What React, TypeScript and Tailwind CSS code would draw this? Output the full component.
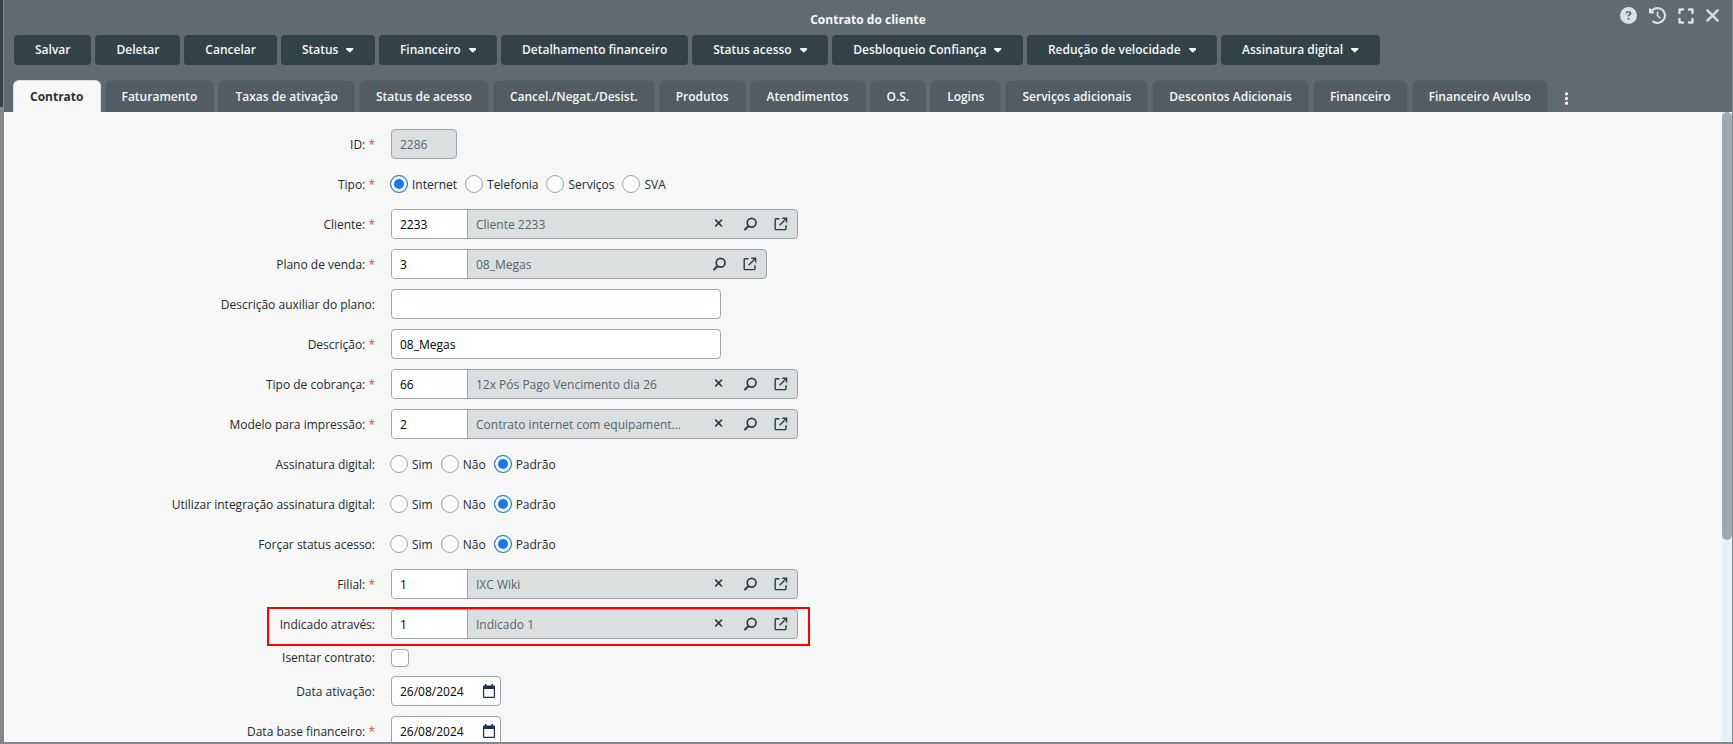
import React from "react";
import { FaCircleQuestion, FaClockRotateLeft, FaEllipsisVertical } from "react-icons/fa6";

const actions: { label: string; menu?: boolean }[] = [
  { label: "Salvar" },
  { label: "Deletar" },
  { label: "Cancelar" },
  { label: "Status", menu: true },
  { label: "Financeiro", menu: true },
  { label: "Detalhamento financeiro" },
  { label: "Status acesso", menu: true },
  { label: "Desbloqueio Confiança", menu: true },
  { label: "Redução de velocidade", menu: true },
  { label: "Assinatura digital", menu: true },
];

const tabs = [
  "Contrato",
  "Faturamento",
  "Taxas de ativação",
  "Status de acesso",
  "Cancel./Negat./Desist.",
  "Produtos",
  "Atendimentos",
  "O.S.",
  "Logins",
  "Serviços adicionais",
  "Descontos Adicionais",
  "Financeiro",
  "Financeiro Avulso",
];

function CaretIcon() {
  return (
    <svg viewBox="0 0 10 16" className="h-3 w-auto" fill="currentColor">
      <path d="M0.9 5.4 H9.1 Q10.4 5.8 9.7 7 L5.7 11 Q5 11.6 4.3 11 L0.3 7 Q-0.4 5.8 0.9 5.4 Z" />
    </svg>
  );
}

function ExpandIcon() {
  return (
    <svg viewBox="0 0 16 16" className="h-4 w-4" fill="none" stroke="currentColor" strokeWidth="2.4" strokeLinejoin="round" strokeLinecap="round">
      <path d="M1.5 5 V1.5 H5 M11 1.5 H14.5 V5 M14.5 11 V14.5 H11 M5 14.5 H1.5 V11" />
    </svg>
  );
}

function CloseIcon() {
  return (
    <svg viewBox="0 0 13 13" className="h-[13px] w-[13px]" fill="none" stroke="currentColor" strokeWidth="2.4" strokeLinecap="round">
      <path d="M1.4 1.4 L11.6 11.6 M11.6 1.4 L1.4 11.6" />
    </svg>
  );
}

function SearchIcon() {
  return (
    <svg viewBox="0 0 14 14" className="h-3.5 w-3.5" fill="none" stroke="currentColor" strokeWidth="1.7">
      <circle cx="8.6" cy="5.7" r="4.4" />
      <path d="M5.5 8.9 L2.1 12.4" strokeWidth="2.1" strokeLinecap="round" />
    </svg>
  );
}

function ExternalIcon() {
  return (
    <svg viewBox="0 0 14 14" className="h-3.5 w-3.5" fill="none" stroke="currentColor" strokeWidth="1.4">
      <path d="M5.5 1.7 H2 Q1.2 1.7 1.2 2.5 V11.8 Q1.2 12.6 2 12.6 H11.2 Q12 12.6 12 11.8 V8.2" />
      <path d="M8.2 1.2 H12.6 V5.6 M12.4 1.4 L5.6 8.2" />
    </svg>
  );
}

function ClearIcon() {
  return (
    <svg viewBox="0 0 14 14" className="h-3.5 w-3.5" fill="none" stroke="currentColor" strokeWidth="1.7">
      <path d="M3.2 2.7 L10 9.5 M10 2.7 L3.2 9.5" />
    </svg>
  );
}

function CalendarIcon() {
  return (
    <svg viewBox="0 0 12 14" className="h-3.5 w-3" fill="#1f2f54">
      <path
        fillRule="evenodd"
        d="M2 0 H3.5 V1.5 H8.5 V0 H10 V1.5 H11 Q12 1.5 12 2.5 V13 Q12 14 11 14 H1 Q0 14 0 13 V2.5 Q0 1.5 1 1.5 H2 Z M1.2 5 V12.8 H10.8 V5 Z"
      />
    </svg>
  );
}

interface RowProps {
  label: string;
  htmlFor?: string;
  required?: boolean;
  compact?: boolean;
  children: React.ReactNode;
}

function Row({ label, htmlFor, required, compact, children }: RowProps) {
  const Label = htmlFor ? "label" : "span";
  return (
    <div className={`flex shrink-0 items-center gap-4 ${compact ? "h-[17px]" : "h-[30px]"}`}>
      <Label htmlFor={htmlFor} className="w-[371px] shrink-0 text-right text-[#222b2e]">
        {label}:{required && <span className="text-[#e74c3c]"> *</span>}
      </Label>
      {children}
    </div>
  );
}

function Lookup({ id, code, text, clearable = true }: { id: string; code: string; text: string; clearable?: boolean }) {
  return (
    <div className="flex h-[30px] overflow-hidden rounded border border-[#9ba5a9] bg-[#dbdfe0] pr-px text-[#2c3e44]">
      <input id={id} defaultValue={code} className="w-[76px] border-r border-[#9ba5a9] bg-white px-2 text-black outline-none" />
      <input
        aria-label={text}
        readOnly
        value={text}
        className="w-[235px] bg-transparent px-2 text-ellipsis text-[#56646a] outline-none"
      />
      {clearable && (
        <button type="button" aria-label="Limpar" className="flex w-[31px] items-center justify-center">
          <ClearIcon />
        </button>
      )}
      <button type="button" aria-label="Pesquisar" className="flex w-[31px] items-center justify-center">
        <SearchIcon />
      </button>
      <button type="button" aria-label="Abrir" className="flex w-[31px] items-center justify-center">
        <ExternalIcon />
      </button>
    </div>
  );
}

function Radios({ name, options, selected }: { name: string; options: string[]; selected: string }) {
  return (
    <div role="radiogroup" aria-label={name} className="-ml-px flex gap-2">
      {options.map((option) => (
        <label key={option} className="flex items-center gap-1 text-[#222b2e]">
          <input
            type="radio"
            name={name}
            defaultChecked={option === selected}
            className="h-[18px] w-[18px] appearance-none rounded-full border border-[#9ba5a9] bg-white checked:border-[#1877f2] checked:bg-[#1877f2] checked:shadow-[inset_0_0_0_3px_white]"
          />
          {option}
        </label>
      ))}
    </div>
  );
}

function TextBox({ id, value }: { id: string; value: string }) {
  return (
    <input id={id} defaultValue={value} className="h-[30px] w-[330px] rounded border border-[#9ba5a9] bg-white px-2 text-black outline-none" />
  );
}

function DateBox({ id, value }: { id: string; value: string }) {
  return (
    <div className="flex h-[30px] w-[110px] items-center rounded border border-[#9ba5a9] bg-white pr-[5px]">
      <input id={id} defaultValue={value} className="min-w-0 flex-1 pl-2 text-black outline-none" />
      <button type="button" aria-label="Abrir calendário">
        <CalendarIcon />
      </button>
    </div>
  );
}

export default function App() {
  return (
    <div className="flex h-screen overflow-hidden bg-[#7f8c8d] pr-px pb-0.5 font-['Open_Sans',sans-serif] text-[12px] leading-4">
      {/* Page behind the window */}
      <div className="flex w-1 shrink-0 flex-col border-r border-[#7f8c8d] bg-[#868686]">
        <div className="h-[107px] bg-[#394144]" />
      </div>

      <div className="flex min-w-0 flex-1 flex-col bg-[#f7f7f7]">
        <header className="relative shrink-0 bg-[#5f6b71] text-[#f7f7f7]">
          <h1 className="h-[35px] pt-3 text-center font-bold">Contrato do cliente</h1>
          <div className="absolute top-[7px] right-[13px] flex items-center gap-3 text-[#dbdfe0]">
            <button type="button" aria-label="Ajuda"><FaCircleQuestion size={17} /></button>
            <button type="button" aria-label="Histórico"><FaClockRotateLeft size={17} /></button>
            <button type="button" aria-label="Expandir"><ExpandIcon /></button>
            <button type="button" aria-label="Fechar"><CloseIcon /></button>
          </div>

          <div className="flex gap-1 pl-2.5">
            {actions.map((action) => (
              <button
                key={action.label}
                type="button"
                className="flex h-[30px] items-center gap-2 rounded bg-[#324249] px-[21px] font-semibold whitespace-nowrap"
              >
                {action.label}
                {action.menu && <CaretIcon />}
              </button>
            ))}
          </div>

          <nav role="tablist" className="mt-[15px] flex gap-1 pl-[9px]">
            {tabs.map((tab, i) => (
              <button
                key={tab}
                type="button"
                role="tab"
                aria-selected={i === 0}
                className={`h-8 rounded-t-md border border-b-0 px-4 whitespace-nowrap ${
                  i === 0 ? "border-[#dbdfe0] bg-[#f7f7f7] font-bold text-[#263238]" : "border-[#566369] bg-[#515d62] font-semibold"
                }`}
              >
                {tab}
              </button>
            ))}
            <button type="button" aria-label="Mais abas" className="ml-[7px] pt-1">
              <FaEllipsisVertical size={15} />
            </button>
          </nav>
        </header>

        <div className="flex min-h-0 flex-1">
          <form className="flex flex-1 flex-col gap-2.5 overflow-hidden pt-[17px] leading-[17px]">
            <Row label="ID" htmlFor="id" required>
              <input id="id" readOnly value="2286" className="h-[30px] w-[66px] rounded border border-[#9ba5a9] bg-[#dbdfe0] px-2 text-[#56646a] outline-none" />
            </Row>
            <Row label="Tipo" required>
              <Radios name="Tipo" options={["Internet", "Telefonia", "Serviços", "SVA"]} selected="Internet" />
            </Row>
            <Row label="Cliente" htmlFor="cliente" required>
              <Lookup id="cliente" code="2233" text="Cliente 2233" />
            </Row>
            <Row label="Plano de venda" htmlFor="plano" required>
              <Lookup id="plano" code="3" text="08_Megas" clearable={false} />
            </Row>
            <Row label="Descrição auxiliar do plano" htmlFor="auxiliar">
              <TextBox id="auxiliar" value="" />
            </Row>
            <Row label="Descrição" htmlFor="descricao" required>
              <TextBox id="descricao" value="08_Megas" />
            </Row>
            <Row label="Tipo de cobrança" htmlFor="cobranca" required>
              <Lookup id="cobranca" code="66" text="12x Pós Pago Vencimento dia 26" />
            </Row>
            <Row label="Modelo para impressão" htmlFor="modelo" required>
              <Lookup id="modelo" code="2" text="Contrato internet com equipament..." />
            </Row>
            <Row label="Assinatura digital">
              <Radios name="Assinatura digital" options={["Sim", "Não", "Padrão"]} selected="Padrão" />
            </Row>
            <Row label="Utilizar integração assinatura digital">
              <Radios name="Utilizar integração assinatura digital" options={["Sim", "Não", "Padrão"]} selected="Padrão" />
            </Row>
            <Row label="Forçar status acesso">
              <Radios name="Forçar status acesso" options={["Sim", "Não", "Padrão"]} selected="Padrão" />
            </Row>
            <Row label="Filial" htmlFor="filial" required>
              <Lookup id="filial" code="1" text="IXC Wiki" />
            </Row>
            <div className="relative shrink-0">
              <Row label="Indicado através" htmlFor="indicado">
                <Lookup id="indicado" code="1" text="Indicado 1" />
              </Row>
              {/* Highlight */}
              <div className="pointer-events-none absolute -top-0.5 left-[263px] h-[39px] w-[543px] border-2 border-[#fb0000]" />
            </div>
            <Row label="Isentar contrato" htmlFor="isentar" compact>
              <input id="isentar" type="checkbox" className="h-[18px] w-[18px] appearance-none rounded border border-[#9ba5a9] bg-white" />
            </Row>
            <Row label="Data ativação" htmlFor="ativacao">
              <DateBox id="ativacao" value="26/08/2024" />
            </Row>
            <Row label="Data base financeiro" htmlFor="base" required>
              <DateBox id="base" value="26/08/2024" />
            </Row>
          </form>

          {/* Scrollbar */}
          <div className="w-2.5 shrink-0 bg-[#e8f1f6]">
            <div className="h-[68%] rounded-full bg-[#9fa9ae]" />
          </div>
        </div>
      </div>
    </div>
  );
}
